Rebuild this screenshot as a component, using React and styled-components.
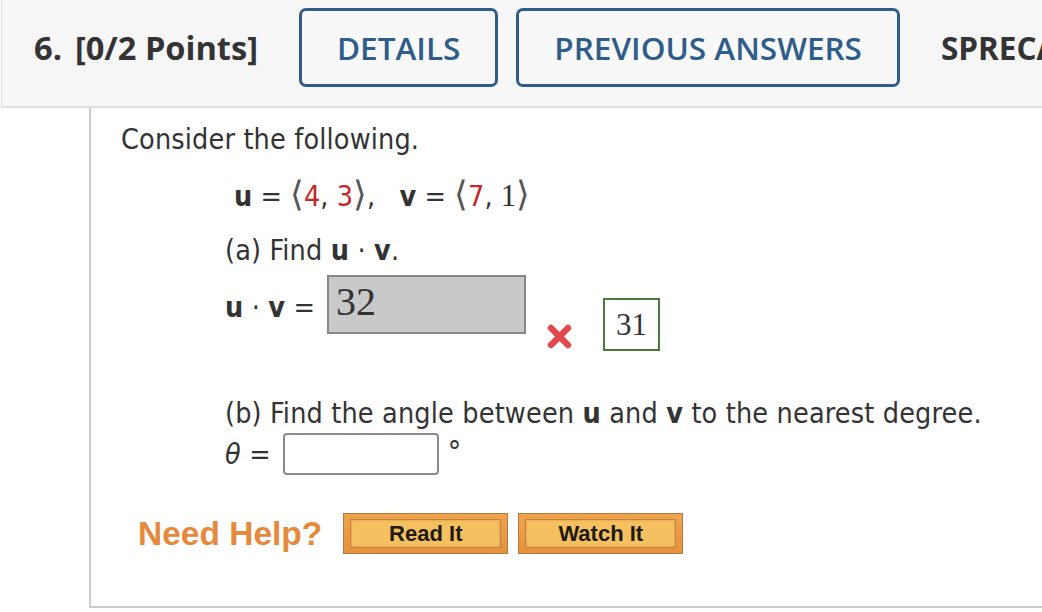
import React from "react";
import styled, { createGlobalStyle } from "styled-components";

const GlobalStyle = createGlobalStyle`
  html, body {
    margin: 0;
    padding: 0;
    background: #ffffff;
  }
  body {
    font-family: "DejaVu Sans", Verdana, sans-serif;
  }
`;

const Page = styled.div`
  width: 1042px;
  height: 612px;
  overflow: hidden;
  background: #fff;
`;

const Header = styled.div`
  display: flex;
  align-items: center;
  height: 95px;
  padding-bottom: 11px;
  margin-left: 1px;
  padding-left: 32px;
  background: #f6f6f6;
  border-left: 1px solid #dcdcdc;
  border-bottom: 2px solid #e0e0e0;
  white-space: nowrap;
  font-family: "Open Sans", sans-serif;
`;

const Title = styled.div`
  font-size: 32.6px;
  font-weight: 700;
  color: #333;
  flex-shrink: 0;
  margin-right: 41px;
`;

const QNum = styled.span`
  margin-right: 13px;
`;

const TabButton = styled.div`
  flex-shrink: 0;
  height: 79px;
  box-sizing: border-box;
  display: flex;
  align-items: center;
  padding: 0 35px;
  margin-right: ${(p) => p.gap || 18}px;
  border: 3px solid #2f5d8a;
  border-radius: 7px;
  background: #f8f8f8;
  color: #2f5d8a;
  font-size: 31.5px;
  font-weight: 600;
`;

const TabLabel = styled.div`
  flex-shrink: 0;
  font-size: 31.5px;
  font-weight: 700;
  color: #333;
`;

const Panel = styled.div`
  margin-left: 89px;
  width: 1000px;
  height: 498px;
  box-sizing: content-box;
  border-left: 2px solid #cccccc;
  border-bottom: 2px solid #cccccc;
  padding-left: 30px;
  display: flex;
  flex-direction: column;
  color: #333;
  font-family: "DejaVu Sans Condensed", "DejaVu Sans", Verdana, sans-serif;
  font-stretch: semi-condensed;
  font-size: 28.5px;
  letter-spacing: 0.15px;
`;

const Line = styled.div`
  line-height: ${(p) => p.lh || 32}px;
  margin-top: ${(p) => p.mt || 0}px;
  margin-left: ${(p) => p.ml || 0}px;
  white-space: nowrap;
`;

const Equation = styled(Line)`
  letter-spacing: 0;
`;

const B = styled.b`
  font-weight: 700;
`;

const Red = styled.span`
  color: #c3272a;
`;

const Bracket = styled.span`
  font-family: "DejaVu Sans", sans-serif;
  font-stretch: normal;
  font-weight: 200;
  font-size: 35px;
  color: #555;
`;

const SerifDigit = styled.span`
  font-family: "Liberation Serif", serif;
  font-size: 31px;
  color: #333;
`;

const Row = styled.div`
  display: flex;
  align-items: flex-start;
  margin-top: ${(p) => p.mt || 0}px;
  margin-left: ${(p) => p.ml || 0}px;
`;

const RowText = styled.div`
  line-height: 32px;
  margin-top: ${(p) => p.mt || 0}px;
  margin-right: ${(p) => p.mr || 8}px;
  white-space: nowrap;
`;

const FilledAnswer = styled.div`
  width: 199px;
  height: 59px;
  box-sizing: border-box;
  border: 2px solid #888;
  background: #c9c9c9;
  padding: 3px 0 0 7px;
  font-family: "Liberation Serif", serif;
  font-size: 40px;
  line-height: 44px;
  letter-spacing: 0;
  color: #333;
`;

const WrongMark = styled.svg`
  margin-top: 49px;
  margin-left: 20px;
  flex-shrink: 0;
`;

const CorrectBox = styled.div`
  margin-top: 23px;
  margin-left: 30px;
  width: 57px;
  height: 53px;
  box-sizing: border-box;
  border: 2px solid #4d7a3b;
  display: flex;
  align-items: center;
  justify-content: center;
  font-family: "Liberation Serif", serif;
  font-size: 31px;
  letter-spacing: 0;
  color: #333;
`;

const EmptyInput = styled.div`
  width: 156px;
  height: 42px;
  box-sizing: border-box;
  border: 2px solid #8a8a8a;
  border-radius: 4px;
  background: #fff;
`;

const Degree = styled.span`
  margin-left: 9px;
  margin-top: ${(p) => p.mt || 0}px;
  font-family: "DejaVu Sans", sans-serif;
  font-size: 30px;
  line-height: 30px;
`;

const Theta = styled.i`
  font-style: italic;
`;

const HelpRow = styled.div`
  display: flex;
  align-items: center;
  margin-top: 38px;
  margin-left: 17px;
`;

const NeedHelp = styled.div`
  font-family: "Liberation Sans", Arial, sans-serif;
  font-stretch: normal;
  font-weight: 700;
  font-size: 33.5px;
  letter-spacing: 0;
  color: #e5893d;
  margin-right: 21px;
`;

const HelpButton = styled.div`
  width: 165px;
  height: 41px;
  box-sizing: border-box;
  padding: 5px 6px;
  margin-right: 10px;
  border: 1px solid #a97c48;
  background: linear-gradient(#f0a34e, #e8913a);
  display: flex;
`;

const HelpInner = styled.div`
  flex: 1;
  display: flex;
  align-items: center;
  justify-content: center;
  border: 1px solid #c0813a;
  background: #f4c060;
  box-shadow: inset 0 0 2px rgba(160, 90, 20, 0.5);
  font-family: "Liberation Sans", Arial, sans-serif;
  font-stretch: normal;
  font-weight: 700;
  font-size: 22px;
  letter-spacing: 0;
  color: #1e1a14;
`;

export default function App() {
  return (
    <Page>
      <GlobalStyle />
      <Header>
        <Title>
          <QNum>6.</QNum>[0/2 Points]
        </Title>
        <TabButton>DETAILS</TabButton>
        <TabButton gap={41}>PREVIOUS ANSWERS</TabButton>
        <TabLabel>SPRECALC7 10.2.015.</TabLabel>
      </Header>
      <Panel>
        <Line mt={16}>Consider the following.</Line>
        <Equation lh={40} mt={18} ml={113}>
          <B>u</B> = <Bracket>⟨</Bracket>
          <Red>4</Red>, <Red>3</Red>
          <Bracket>⟩</Bracket>,{"\u00a0\u00a0\u00a0"}
          <B>v</B> = <Bracket>⟨</Bracket>
          <Red>7</Red>, <SerifDigit>1</SerifDigit>
          <Bracket>⟩</Bracket>
        </Equation>
        <Line mt={18} ml={104}>
          (a) Find <B>u</B> · <B>v</B>.
        </Line>
        <Row mt={8} ml={104}>
          <RowText mt={17} mr={12}>
            <B>u</B> · <B>v</B> =
          </RowText>
          <FilledAnswer>32</FilledAnswer>
          <WrongMark width="27" height="25" viewBox="0 0 27 25">
            <path
              d="M5 4 L22 21 M22 4 L5 21"
              stroke="#e0494d"
              strokeWidth="6.5"
              strokeLinecap="round"
            />
          </WrongMark>
          <CorrectBox>31</CorrectBox>
        </Row>
        <Line mt={47} ml={104}>
          (b) Find the angle between <B>u</B> and <B>v</B> to the nearest
          degree.
        </Line>
        <Row mt={3} ml={104}>
          <RowText mt={6} mr={12}>
            <Theta>θ</Theta> =
          </RowText>
          <EmptyInput />
          <Degree mt={4}>°</Degree>
        </Row>
        <HelpRow>
          <NeedHelp>Need Help?</NeedHelp>
          <HelpButton>
            <HelpInner>Read It</HelpInner>
          </HelpButton>
          <HelpButton>
            <HelpInner>Watch It</HelpInner>
          </HelpButton>
        </HelpRow>
      </Panel>
    </Page>
  );
}
